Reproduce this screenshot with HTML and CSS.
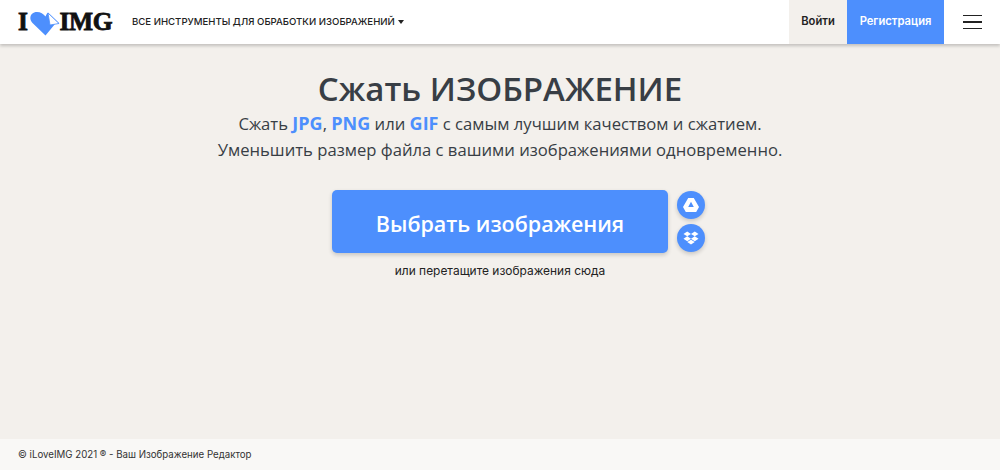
FILE: index.html
```html
<!DOCTYPE html>
<html lang="ru">
<head>
<meta charset="utf-8">
<title>Сжать ИЗОБРАЖЕНИЕ</title>
<link rel="stylesheet" href="styles.css">
</head>
<body>
<header class="topbar">
  <a class="logo"><span>I</span><svg class="logo-heart" width="30" height="24" viewBox="0 0 30 24"><path d="M15.500 23.500 L2.500 11 C-2 6 1 0 7 0 C10.500 0 13.500 2 15.500 4.500 C16 3 17 1.500 18 .5 L29.500 11.500 L25 12 Z" fill="#4d8ffd"/><path d="M18 1 L29 11.500 L20 13 Z" fill="#fff" stroke="#4d8ffd" stroke-width=".8"/></svg><span>IMG</span></a>
  <nav class="tools">ВСЕ ИНСТРУМЕНТЫ ДЛЯ ОБРАБОТКИ ИЗОБРАЖЕНИЙ<i class="caret"></i></nav>
  <div class="actions">
    <a class="login">Войти</a>
    <a class="register">Регистрация</a>
    <button class="burger" aria-label="Меню"><i></i><i></i><i></i></button>
  </div>
</header>
<main class="hero">
  <h1>Сжать ИЗОБРАЖЕНИЕ</h1>
  <p class="lead">Сжать <b>JPG</b>, <b>PNG</b> или <b>GIF</b> с самым лучшим качеством и сжатием.<br>Уменьшить размер файла с вашими изображениями одновременно.</p>
  <div class="picker">
    <a class="pick">Выбрать изображения</a>
    <div class="clouds">
      <span class="cloud"><svg width="16" height="14" viewBox="0 0 16 14"><path fill-rule="evenodd" d="M5.200 0h5.600L16 9l-2.800 5H2.800L0 9zM8 3.800 5.200 9h5.600z" fill="#fff"/></svg></span>
      <span class="cloud"><svg width="16" height="15" viewBox="0 0 17 15"><path d="M4.500 0 8.500 2.600 4.500 5.200.5 2.600zM12.500 0l4 2.600-4 2.600-4-2.600zM.5 7.800l4-2.600 4 2.600-4 2.600zM12.500 5.200l4 2.600-4 2.600-4-2.600zM4.500 11.300l4-2.600 4 2.600-4 2.700z" fill="#fff"/></svg></span>
    </div>
  </div>
  <p class="drop">или перетащите изображения сюда</p>
</main>
<footer class="foot">© iLoveIMG 2021 ® - Ваш Изображение Редактор</footer>
</body>
</html>
```
FILE: styles.css
```css
* { box-sizing: border-box; }
html, body { height: 100%; }
body {
  margin: 0;
  display: flex;
  flex-direction: column;
  height: 470px;
  overflow: hidden;
  background: #f3f0ec;
  font-family: "Open Sans", "Noto Sans", sans-serif;
  color: #383e45;
}
.topbar {
  flex: none;
  height: 44px;
  display: flex;
  align-items: center;
  padding-left: 18px;
  background: #fff;
  box-shadow: 0 2px 3px rgba(0,0,0,.2);
}
.logo {
  display: flex;
  align-items: center;
  width: 114px;
  font: 700 25.500px/1 "Liberation Serif", serif;
  letter-spacing: -.4px;
  color: #111;
  -webkit-text-stroke: .8px #111;
}
.logo-heart { margin: 3px 0 0 2px; }
.tools {
  display: flex;
  align-items: center;
  font: 500 9.600px/1 Inter, sans-serif;
  color: #222;
}
.caret {
  margin-left: 3px;
  border: 3.500px solid transparent;
  border-top: 4px solid #222;
  border-bottom: 0;
}
.actions { margin-left: auto; display: flex; align-items: stretch; height: 44px; }
.login, .register {
  display: flex;
  align-items: center;
  justify-content: center;
  font: 600 11.200px/1 Inter, sans-serif;
}
.login { width: 58px; background: #f3f0ec; color: #222; }
.register { width: 97px; background: #4d8ffd; color: #fff; }
.burger {
  width: 56px;
  padding: 0;
  border: 0;
  background: none;
  display: flex;
  flex-direction: column;
  align-items: center;
  justify-content: center;
  gap: 5px;
}
.burger i { width: 19px; height: 1.500px; background: #222; }
.hero { flex: 1; display: flex; flex-direction: column; align-items: center; text-align: center; }
h1 { margin: 23px 0 0; font-size: 33px; line-height: 44px; font-weight: 600; color: #383e45; }
.lead { margin: 0; font-size: 16.650px; line-height: 26px; font-weight: 400; color: #383e45; }
.lead b { font-size: 18px; line-height: 1; font-weight: 700; color: #4d8ffd; }
.picker { position: relative; margin-top: 27px; }
.pick {
  display: flex;
  align-items: center;
  justify-content: center;
  width: 336px;
  height: 63px;
  padding-top: 3px;
  border-radius: 5px;
  background: #4d8ffd;
  color: #fff;
  font-size: 21.500px;
  font-weight: 600;
  box-shadow: 0 2px 4px rgba(0,0,0,.18);
}
.clouds {
  position: absolute;
  left: 345px;
  top: 1px;
  display: flex;
  flex-direction: column;
  gap: 5px;
}
.cloud {
  width: 28px;
  height: 28px;
  border-radius: 50%;
  background: #4d8ffd;
  display: flex;
  align-items: center;
  justify-content: center;
  box-shadow: 0 2px 4px rgba(0,0,0,.18);
}
.drop { margin: 10px 0 0; font: 400 11.950px/16px Inter, sans-serif; color: #222; }
.foot {
  flex: none;
  height: 31px;
  padding: 0 18px;
  display: flex;
  align-items: center;
  background: #f9f8f6;
  font: 400 9.700px/1 Inter, sans-serif;
  color: #333;
}
```
